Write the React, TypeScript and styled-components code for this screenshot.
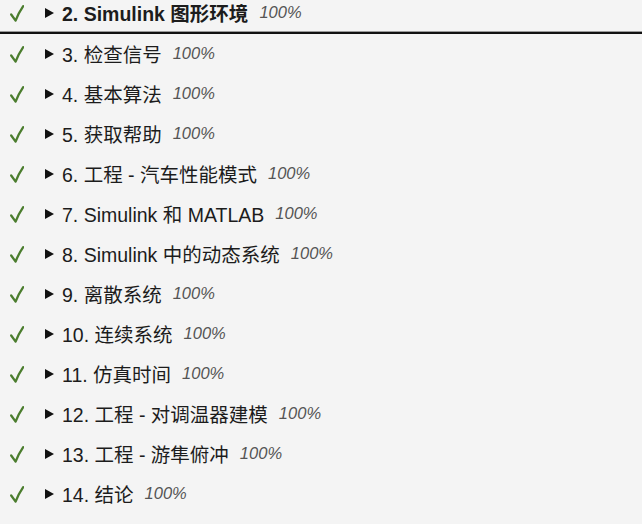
import React from 'react';
import styled, { createGlobalStyle } from 'styled-components';

const GlobalStyle = createGlobalStyle`
  html, body {
    margin: 0;
    padding: 0;
    background: #f4f4f4;
    overflow: hidden;
  }
`;

const List = styled.ul`
  list-style: none;
  margin: -6px 0 0;
  padding: 0;
  font-family: "Liberation Sans", Arial, "Noto Sans CJK SC", sans-serif;
  color: #1c1c1c;
`;

const Row = styled.li<{ $current?: boolean }>`
  display: flex;
  align-items: center;
  height: ${(p) => (p.$current ? '38px' : '40px')};
  padding-left: 10px;
  border-bottom: ${(p) => (p.$current ? '2px solid #111' : 'none')};
  box-shadow: ${(p) => (p.$current ? '0 -1px 0 #9a9a9a inset' : 'none')};
`;

const CheckMark = styled.svg`
  width: 14px;
  height: 17px;
  margin-right: 21px;
  flex-shrink: 0;
`;

const Caret = styled.span`
  width: 0;
  height: 0;
  border-top: 5.5px solid transparent;
  border-bottom: 5.5px solid transparent;
  border-left: 9px solid #111;
  margin-right: 8px;
  margin-bottom: 1px;
`;

const Title = styled.span<{ $current?: boolean }>`
  font-size: 19.5px;
  font-weight: ${(p) => (p.$current ? 700 : 400)};
  white-space: nowrap;
  margin-top: -1px;
`;

const Progress = styled.span`
  margin-left: 11px;
  font-size: 16.5px;
  font-style: italic;
  color: #555;
  margin-top: -2px;
`;

const chapters = [
  '2. Simulink 图形环境',
  '3. 检查信号',
  '4. 基本算法',
  '5. 获取帮助',
  '6. 工程 - 汽车性能模式',
  '7. Simulink 和 MATLAB',
  '8. Simulink 中的动态系统',
  '9. 离散系统',
  '10. 连续系统',
  '11. 仿真时间',
  '12. 工程 - 对调温器建模',
  '13. 工程 - 游隼俯冲',
  '14. 结论',
];

function Done() {
  return (
    <CheckMark viewBox="0 0 14 17">
      <path
        d="M1.2 9.5 L5.6 15.6 Q8.5 8 13.2 1.2"
        fill="none"
        stroke="#4b7d2e"
        strokeWidth="2.3"
        strokeLinecap="round"
        strokeLinejoin="round"
      />
    </CheckMark>
  );
}

export default function App() {
  return (
    <>
      <GlobalStyle />
      <List>
        {chapters.map((title, i) => (
          <Row key={title} $current={i === 0}>
            <Done />
            <Caret />
            <Title $current={i === 0}>{title}</Title>
            <Progress>100%</Progress>
          </Row>
        ))}
      </List>
    </>
  );
}
